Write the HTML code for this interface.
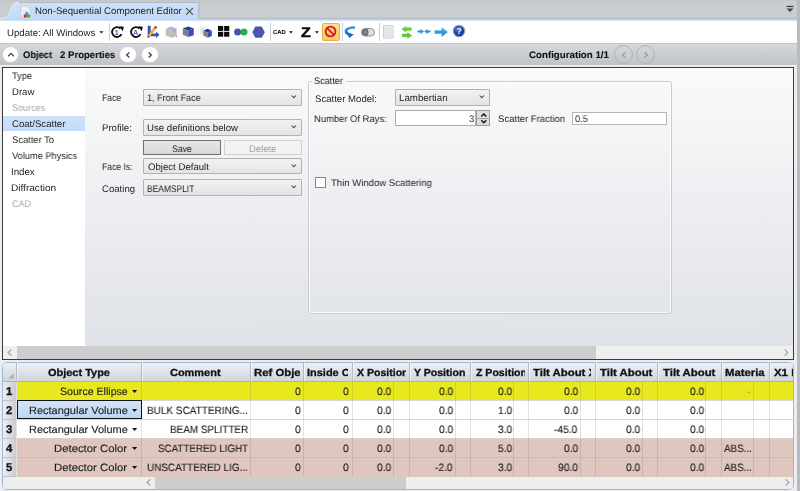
<!DOCTYPE html>
<html><head><meta charset="utf-8"><title>Non-Sequential Component Editor</title>
<style>
html,body{margin:0;padding:0;}
body{width:800px;height:491px;overflow:hidden;position:relative;background:#c9ccd1;font-family:"Liberation Sans",sans-serif;color:#1e1e1e;text-rendering:geometricPrecision;}
.t{will-change:transform;position:absolute;white-space:nowrap;line-height:1;transform-origin:0 0;}
div{box-sizing:border-box;}
svg{position:absolute;overflow:visible;will-change:transform;}
.cb{position:absolute;border:1px solid #b2b2b2;background:linear-gradient(#f2f2f2,#e4e4e4);border-radius:1px;}
.sep{position:absolute;width:1px;background:#c3d3e6;top:23px;height:18px;}
.circ{position:absolute;border-radius:50%;}
</style></head><body>
<div style="position:absolute;left:0px;top:0px;width:800px;height:1.2px;background:#c2c5ca;"></div>
<div style="position:absolute;left:797.4px;top:0px;width:2.6px;height:491px;background:#b9bbbf;"></div>
<div style="position:absolute;left:0px;top:17.6px;width:797.4px;height:1px;background:#b4b8bf;"></div>
<svg style="left:0;top:0" width="200" height="21" viewBox="0 0 200 21">
<defs><linearGradient id="tg" x1="0" y1="0" x2="0" y2="1"><stop offset="0" stop-color="#cfe1fa"/><stop offset="1" stop-color="#c1d8f8"/></linearGradient></defs>
<path d="M0 19 C6 19 8 17 10 12 C12 7 13 2.6 19 2.6 L198.6 2.6 L198.6 20.6 L0 20.6 Z" fill="url(#tg)"/><path d="M0 18.6 C6 18.6 8 16.6 10 11.6 C12 6.6 13 2.3 19 2.3" fill="none" stroke="#eef2f8" stroke-width="0.9"/><path d="M19 2.5 L198.8 2.5 L198.8 18.4" fill="none" stroke="#a9aeb6" stroke-width="0.8"/>
</svg>
<div style="position:absolute;left:0px;top:18.6px;width:797.4px;height:2px;background:linear-gradient(#b5cff3,#dbe8fb);"></div>
<svg style="left:20px;top:5px" width="12" height="14" viewBox="0 0 12 14">
<path d="M1 1 H7 L10 4 V12.5 H1 Z" fill="#f3f3f3" stroke="#c9c9c9" stroke-width="0.8"/>
<path d="M3 5h5M3 7h5M3 9h2" stroke="#d8d8d8" stroke-width="0.7"/>
<circle cx="6.8" cy="8.4" r="1.7" fill="#3a9bf0"/><circle cx="5.2" cy="11" r="1.7" fill="#e0242c"/><circle cx="8.5" cy="11" r="1.7" fill="#2fb52f"/>
</svg>
<span class="t" style="left:34.73px;top:7px;font-size:9.6px;transform:scaleX(1.0045);">Non-Sequential Component Editor</span>
<svg style="left:185px;top:7px" width="9" height="9" viewBox="0 0 9 9"><path d="M1.1 1.1 L7.9 7.6 M7.9 1.1 L1.1 7.6" stroke="#505050" stroke-width="1.25" fill="none"/></svg>
<svg style="left:786px;top:5px" width="8" height="8" viewBox="0 0 8 8"><rect x="0.5" y="0.8" width="7" height="1.3" fill="#444"/><path d="M0.5 3.4 H7.5 L4 7 Z" fill="#444"/></svg>
<div style="position:absolute;left:0px;top:20.6px;width:797.4px;height:22.6px;background:#fff;"></div>
<span class="t" style="left:7.33px;top:29px;font-size:9.6px;transform:scaleX(1.0025);">Update: All Windows</span>
<svg style="left:99px;top:31px" width="5" height="3" viewBox="0 0 5 3"><path d="M0.3 0.2 H4.5 L2.4 2.6 Z" fill="#222"/></svg>
<div class="sep" style="left:108.5px"></div>
<div class="sep" style="left:269.7px"></div>
<div class="sep" style="left:342px"></div>
<div class="sep" style="left:379.4px"></div>
<svg style="left:110.4px;top:25.1px" width="14" height="14" viewBox="-7 -7 14 14">
<path d="M4.5 2.1 A4.95 4.95 0 1 1 3.5 -3.5" fill="none" stroke="#0c0c0c" stroke-width="1.8"/>
<path d="M2.2 -5.7 L6.8 -5.3 L5.8 -0.7 Z" fill="#0c0c0c"/>
<text x="-0.3" y="2.6" font-size="7.2" font-weight="bold" text-anchor="middle" fill="#4a56b8" font-family="Liberation Sans, sans-serif">1</text></svg>
<svg style="left:128.6px;top:25.1px" width="14" height="14" viewBox="-7 -7 14 14">
<path d="M4.5 2.1 A4.95 4.95 0 1 1 3.5 -3.5" fill="none" stroke="#0c0c0c" stroke-width="1.8"/>
<path d="M2.2 -5.7 L6.8 -5.3 L5.8 -0.7 Z" fill="#0c0c0c"/>
<text x="-0.3" y="2.6" font-size="7.2" font-weight="bold" text-anchor="middle" fill="#4a56b8" font-family="Liberation Sans, sans-serif">A</text></svg>
<svg style="left:146px;top:25px" width="15" height="14" viewBox="0 0 15 14">
<path d="M1.7 0.8 H4.7 V8.5 H10.0 V6.6 L13.5 9.8 L10.0 12.9 V11.3 H1.7 Z" fill="#3953b4"/>
<path d="M2.6 11.4 L9.3 2.6" stroke="#f0a020" stroke-width="2.5"/>
<path d="M3.2 11.0 L9.6 2.7" stroke="#fbd25a" stroke-width="0.8"/>
<path d="M8.9 3.2 L10.3 1.4" stroke="#dc2430" stroke-width="2.5"/>
<path d="M1.3 12.9 L3.6 11.9 L1.9 10.6 Z" fill="#3a3a3a"/>
</svg>
<svg style="left:164.5px;top:26px" width="13" height="13" viewBox="0 0 13 13">
<path d="M5.9 0.5 L11.5 2.6 L6.6 4.7 L0.6 3.0 Z" fill="#a9b4dc"/>
<path d="M0.6 3.0 L6.6 4.7 V11.7 L0.6 9.3 Z" fill="#bdbdbd"/>
<path d="M6.6 4.7 L11.5 2.6 V9.6 L6.6 11.7 Z" fill="#a3aedb"/>
<path d="M4.6 3.6 L11.2 10.2" stroke="#f0c070" stroke-width="1.7"/>
<path d="M11.0 10.0 L12.0 11.0" stroke="#e58a8a" stroke-width="1.6"/>
</svg>
<svg style="left:182px;top:26px" width="13" height="13" viewBox="0 0 13 13">
<path d="M6.2 0.5 L11.8 2.6 L6.2 4.6 L0.8 2.4 Z" fill="#25369b"/>
<path d="M0.8 2.4 L6.2 4.6 V11 L0.8 8.7 Z" fill="#808080"/>
<path d="M6.2 4.6 L11.8 2.6 V9.2 L6.2 11 Z" fill="#3d4eb1"/>
</svg>
<svg style="left:199.5px;top:26px" width="13" height="13" viewBox="0 0 13 13">
<defs><linearGradient id="gh" x1="0" y1="0" x2="1" y2="0"><stop offset="0" stop-color="#dcdcdc"/><stop offset="1" stop-color="#f6f6f6"/></linearGradient></defs>
<rect x="0.6" y="0.5" width="5.6" height="7.7" fill="url(#gh)"/>
<path d="M7.6 2.8 L11.8 4.7 L7.6 6.5 L3.3 4.7 Z" fill="#25369b"/>
<path d="M3.3 4.7 L7.6 6.5 V11.7 L3.3 9.6 Z" fill="#808080"/>
<path d="M7.6 6.5 L11.8 4.7 V10 L7.6 11.7 Z" fill="#3d4eb1"/>
</svg>
<svg style="left:217.8px;top:26.2px" width="12" height="11" viewBox="0 0 12 11">
<rect x="0" y="0" width="5.2" height="4.9" fill="#0a0a0a"/><rect x="6.1" y="0" width="5.2" height="4.9" fill="#0a0a0a"/>
<rect x="0" y="5.8" width="5.2" height="4.9" fill="#0a0a0a"/><rect x="6.1" y="5.8" width="5.2" height="4.9" fill="#0a0a0a"/></svg>
<svg style="left:233px;top:27px" width="16" height="10" viewBox="0 0 16 10">
<circle cx="4.6" cy="5" r="3.5" fill="#4652b4"/><circle cx="11" cy="5" r="3.5" fill="#22b14c"/></svg>
<svg style="left:252px;top:25.6px" width="13" height="13" viewBox="0 0 13 13">
<path d="M0.3 6.2 L3.4 0.6 H9.7 L12.8 6.2 L9.7 11.8 H3.4 Z" fill="#4a55b2"/></svg>
<span class="t" style="left:273.27px;top:31px;font-size:5.8px;transform:scaleX(1.0113);font-weight:bold;-webkit-text-stroke:0.1px;color:#111;">CAD</span>
<svg style="left:288.6px;top:30.8px" width="4" height="3" viewBox="0 0 4 3"><path d="M0 0.2 H3.8 L1.9 2.4 Z" fill="#111"/></svg>
<span class="t" style="left:301.42px;top:25px;font-size:14px;transform:scaleX(1.1429);font-weight:bold;-webkit-text-stroke:0.5px;color:#0a0a0a;">Z</span>
<svg style="left:314.8px;top:30.8px" width="4" height="3" viewBox="0 0 4 3"><path d="M0 0.2 H3.8 L1.9 2.4 Z" fill="#111"/></svg>
<div style="position:absolute;left:322px;top:23px;width:18px;height:17.8px;background:linear-gradient(#fde08e,#fbc860);border:1px solid #e6b04a;border-radius:2px;"></div>
<svg style="left:324.3px;top:25.3px" width="13" height="13" viewBox="-6.5 -6.5 13 13">
<circle r="4.9" fill="none" stroke="#d3202a" stroke-width="1.9"/><path d="M-3.4 -3.4 L3.4 3.4" stroke="#d3202a" stroke-width="1.9"/></svg>
<svg style="left:344px;top:26px" width="12" height="13" viewBox="0 0 12 13">
<defs><linearGradient id="ba" x1="0" y1="0" x2="0" y2="1"><stop offset="0" stop-color="#2fa0ec"/><stop offset="1" stop-color="#1662b4"/></linearGradient></defs>
<path d="M11 0.2 C5.5 0.2 0.6 1.6 0.6 5.2 C0.6 6.9 1.7 8.0 3.2 8.7 L5.4 11.8 L9.5 8.5 L6.2 7.3 C4.6 6.6 3.6 6.0 3.6 4.9 C3.6 3.2 7 2.7 11 2.7 Z" fill="url(#ba)"/>
<path d="M2.8 6.3 L9.5 8.5 L5.4 11.8 Z" fill="#1b6cbc"/></svg>
<svg style="left:361.4px;top:27.6px" width="14" height="9" viewBox="0 0 14 9">
<rect x="0.5" y="0.5" width="13" height="7.6" rx="3.8" fill="#dedede" stroke="#7c7c7c" stroke-width="0.8"/>
<path d="M4.3 0.5 H7.2 V8.1 H4.3 A3.8 3.8 0 0 1 4.3 0.5 Z" fill="#7e7e7e"/>
<circle cx="4.8" cy="4.3" r="2.5" fill="#6a6a6a"/><circle cx="4.8" cy="4.3" r="1.5" fill="#8e8e8e"/></svg>
<svg style="left:382.6px;top:25.2px" width="11" height="14" viewBox="0 0 11 14">
<rect x="0.6" y="0.6" width="9.4" height="12.4" fill="#f4f5f7" stroke="#c6c6c6" stroke-width="0.9"/>
<rect x="2.6" y="1.4" width="6.8" height="10.8" fill="#e3ecf8"/>
<path d="M1.2 3.2H9.4M1.2 5.2H9.4M1.2 7.2H9.4M1.2 9.2H9.4M1.2 11.0H9.4" stroke="#dcdcdc" stroke-width="0.6"/>
<path d="M2.4 1.2V12.4" stroke="#e6cfcf" stroke-width="0.6"/></svg>
<svg style="left:400.6px;top:25.6px" width="12" height="13" viewBox="0 0 12 13">
<path d="M0.8 3.15 L4.85 0.4 V1.8 H10.25 V4.5 H4.85 V5.9 Z" fill="#62d63e" stroke="#48b82c" stroke-width="0.4"/>
<path d="M10.8 9.5 L6.65 6.7 V8.1 H1.25 V10.8 H6.65 V12.3 Z" fill="#55cc32" stroke="#3fae26" stroke-width="0.4"/></svg>
<svg style="left:416.6px;top:29.4px" width="14" height="6" viewBox="0 0 14 6">
<path d="M0.5 1.5 H3.5 V0 L7.1 2.5 L3.5 5 V3.5 H0.5 Z" fill="#2598e4"/>
<path d="M13.7 1.5 H10.7 V0 L7.1 2.5 L10.7 5 V3.5 H13.7 Z" fill="#2598e4"/></svg>
<svg style="left:434px;top:27px" width="14" height="11" viewBox="0 0 14 11">
<defs><linearGradient id="ra" x1="0" y1="0" x2="0" y2="1"><stop offset="0" stop-color="#52b8f2"/><stop offset="1" stop-color="#1a78c8"/></linearGradient></defs>
<path d="M0.7 3.6 H7.8 V0.8 L13.7 5.1 L7.8 9.5 V6.6 H0.7 Z" fill="url(#ra)" stroke="#2a84cc" stroke-width="0.3"/></svg>
<svg style="left:451.55px;top:24.45px" width="14" height="14" viewBox="-7 -7 14 14">
<circle r="6.3" fill="#a4a8af"/><circle r="5.2" fill="#1f3fa4"/><circle cx="-0.8" cy="-1.8" r="3.6" fill="#4a74d4" opacity="0.6"/>
<text x="0.1" y="3.0" font-size="8.6" font-weight="bold" text-anchor="middle" fill="#fff" font-family="Liberation Sans, sans-serif">?</text></svg>
<div style="position:absolute;left:0px;top:43.2px;width:797.4px;height:21.6px;background:linear-gradient(#d6d8dc,#bfc2c6);border-top:1px solid #c3c5c9;"></div>
<div style="position:absolute;left:0px;top:64.8px;width:797.4px;height:426.2px;background:#ecedf0;"></div>
<div style="position:absolute;left:2px;top:46px;width:17.2px;height:17.2px;background:#fff;border:1px solid #cfcfcf;border-radius:50%;"></div><svg style="left:5.6px;top:49.6px" width="10" height="10" viewBox="-5 -5 10 10"><path d="M-2.8 1.2 L0 -1.6 L2.8 1.2" fill="none" stroke="#444" stroke-width="1.3"/></svg>
<div style="position:absolute;left:119.4px;top:45.8px;width:17.6px;height:17.6px;background:#fff;border:1px solid #cfcfcf;border-radius:50%;"></div><svg style="left:123.19999999999999px;top:49.6px" width="10" height="10" viewBox="-5 -5 10 10"><path d="M1.4 -2.6 L-1.4 0 L1.4 2.6" fill="none" stroke="#444" stroke-width="1.3"/></svg>
<div style="position:absolute;left:141px;top:45.8px;width:17.6px;height:17.6px;background:#fff;border:1px solid #cfcfcf;border-radius:50%;"></div><svg style="left:144.8px;top:49.6px" width="10" height="10" viewBox="-5 -5 10 10"><path d="M-1.4 -2.6 L1.4 0 L-1.4 2.6" fill="none" stroke="#444" stroke-width="1.3"/></svg>
<div style="position:absolute;left:614.1px;top:45.2px;width:18.8px;height:18.8px;background:transparent;border:1px solid #b2b2b2;border-radius:50%;"></div><svg style="left:618.5px;top:49.6px" width="10" height="10" viewBox="-5 -5 10 10"><path d="M1.4 -2.6 L-1.4 0 L1.4 2.6" fill="none" stroke="#9a9a9a" stroke-width="1.3"/></svg>
<div style="position:absolute;left:636.2px;top:45.2px;width:18.8px;height:18.8px;background:transparent;border:1px solid #b2b2b2;border-radius:50%;"></div><svg style="left:640.6px;top:49.6px" width="10" height="10" viewBox="-5 -5 10 10"><path d="M-1.4 -2.6 L1.4 0 L-1.4 2.6" fill="none" stroke="#9a9a9a" stroke-width="1.3"/></svg>
<span class="t" style="left:23.03px;top:51px;font-size:9.6px;transform:scaleX(0.9736);font-weight:bold;-webkit-text-stroke:0.1px;color:#111;">Object</span>
<span class="t" style="left:60.11px;top:51px;font-size:9.6px;transform:scaleX(0.9961);font-weight:bold;-webkit-text-stroke:0.1px;color:#111;">2 Properties</span>
<span class="t" style="left:529.21px;top:51px;font-size:9.6px;transform:scaleX(1.0136);font-weight:bold;-webkit-text-stroke:0.1px;color:#111;">Configuration 1/1</span>
<div style="position:absolute;left:2.2px;top:67px;width:791.6px;height:292.6px;background:#fff;border:1px solid #3a3a3a;"></div>
<div style="position:absolute;left:85px;top:68px;width:707.8px;height:278px;background:linear-gradient(#fafafa,#dfe2e8);"></div>
<div style="position:absolute;left:3.2px;top:116px;width:81.8px;height:14.6px;background:linear-gradient(#cfe2fb,#c2dafa);"></div>
<span class="t" style="left:12.12px;top:72px;font-size:9.6px;transform:scaleX(0.9573);">Type</span>
<span class="t" style="left:11.54px;top:88px;font-size:9.6px;transform:scaleX(0.9954);">Draw</span>
<span class="t" style="left:11.85px;top:104px;font-size:9.6px;transform:scaleX(0.9427);color:#a9a9a9;">Sources</span>
<span class="t" style="left:11.82px;top:120px;font-size:9.6px;transform:scaleX(0.9961);">Coat/Scatter</span>
<span class="t" style="left:11.83px;top:136px;font-size:9.6px;transform:scaleX(0.9754);">Scatter To</span>
<span class="t" style="left:12.21px;top:152px;font-size:9.6px;transform:scaleX(0.9614);">Volume Physics</span>
<span class="t" style="left:11.43px;top:168px;font-size:9.6px;transform:scaleX(1.0106);">Index</span>
<span class="t" style="left:11.49px;top:184px;font-size:9.6px;transform:scaleX(1.0489);">Diffraction</span>
<span class="t" style="left:11.85px;top:200px;font-size:9.6px;transform:scaleX(0.9437);color:#a9a9a9;">CAD</span>
<div style="position:absolute;left:3.2px;top:346px;width:789.6px;height:12.6px;background:#efefef;"></div>
<div style="position:absolute;left:17px;top:346px;width:579px;height:12.6px;background:#cdcdcd;"></div>
<svg style="left:7.4px;top:349.2px" width="6" height="7" viewBox="0 0 6 7"><path d="M4.4 0.4 L1.2 3.5 L4.4 6.6" fill="none" stroke="#a3a3a3" stroke-width="1.25"/></svg>
<svg style="left:783.2px;top:349.2px" width="6" height="7" viewBox="0 0 6 7"><path d="M1.6 0.4 L4.8 3.5 L1.6 6.6" fill="none" stroke="#a3a3a3" stroke-width="1.25"/></svg>
<span class="t" style="left:102.11px;top:94px;font-size:9.6px;transform:scaleX(0.8929);">Face</span>
<div class="cb" style="position:absolute;left:143px;top:89px;width:159.4px;height:16.8px;"></div><span class="t" style="left:147.28px;top:94px;font-size:9.6px;transform:scaleX(0.9396);">1, Front Face</span><svg style="left:291.2px;top:95.0px" width="6" height="4" viewBox="0 0 6 4"><path d="M0.6 0.5 L2.8 2.7 L5.0 0.5" fill="none" stroke="#484848" stroke-width="1.05"/></svg>
<span class="t" style="left:102.03px;top:124px;font-size:9.6px;transform:scaleX(0.9991);">Profile:</span>
<div class="cb" style="position:absolute;left:143px;top:119px;width:159.4px;height:16.8px;"></div><span class="t" style="left:147.23px;top:124px;font-size:9.6px;transform:scaleX(1.0039);">Use definitions below</span><svg style="left:291.2px;top:125.0px" width="6" height="4" viewBox="0 0 6 4"><path d="M0.6 0.5 L2.8 2.7 L5.0 0.5" fill="none" stroke="#484848" stroke-width="1.05"/></svg>
<div style="position:absolute;left:143px;top:140px;width:78.4px;height:15.4px;background:linear-gradient(#e6e6e6,#d9d9d9);border:1px solid #707070;"></div>
<span class="t" style="left:171.57px;top:145px;font-size:9.6px;transform:scaleX(0.8983);">Save</span>
<div style="position:absolute;left:223.8px;top:140px;width:78.6px;height:15.4px;background:#f3f3f3;border:1px solid #d2d2d2;"></div>
<span class="t" style="left:249.25px;top:145px;font-size:9.6px;transform:scaleX(0.9813);color:#9b9b9b;">Delete</span>
<span class="t" style="left:102.12px;top:163px;font-size:9.6px;transform:scaleX(0.8911);">Face Is:</span>
<div class="cb" style="position:absolute;left:143px;top:157.6px;width:159.4px;height:16.8px;"></div><span class="t" style="left:147.52px;top:163px;font-size:9.6px;transform:scaleX(1.0019);">Object Default</span><svg style="left:291.2px;top:163.6px" width="6" height="4" viewBox="0 0 6 4"><path d="M0.6 0.5 L2.8 2.7 L5.0 0.5" fill="none" stroke="#484848" stroke-width="1.05"/></svg>
<span class="t" style="left:102.32px;top:185px;font-size:9.6px;transform:scaleX(1.0010);">Coating</span>
<div class="cb" style="position:absolute;left:143px;top:179.4px;width:159.4px;height:16.8px;"></div><span class="t" style="left:147.32px;top:185px;font-size:9.6px;transform:scaleX(0.8791);">BEAMSPLIT</span><svg style="left:291.2px;top:185.4px" width="6" height="4" viewBox="0 0 6 4"><path d="M0.6 0.5 L2.8 2.7 L5.0 0.5" fill="none" stroke="#484848" stroke-width="1.05"/></svg>
<div style="position:absolute;left:307.6px;top:81px;width:364px;height:232.8px;border:1px solid #c9cdd3;border-radius:3px;box-shadow:inset 0 0 0 1px rgba(255,255,255,0.75);"></div>
<div style="position:absolute;left:311.5px;top:78px;width:34px;height:8px;background:#f5f5f5;"></div>
<span class="t" style="left:313.55px;top:77px;font-size:9.6px;transform:scaleX(0.9476);">Scatter</span>
<span class="t" style="left:314.72px;top:95px;font-size:9.6px;transform:scaleX(0.9954);">Scatter Model:</span>
<div class="cb" style="position:absolute;left:395px;top:89px;width:95.4px;height:16.6px;"></div><span class="t" style="left:399.02px;top:94px;font-size:9.6px;transform:scaleX(1.0117);">Lambertian</span><svg style="left:479.2px;top:95.0px" width="6" height="4" viewBox="0 0 6 4"><path d="M0.6 0.5 L2.8 2.7 L5.0 0.5" fill="none" stroke="#484848" stroke-width="1.05"/></svg>
<span class="t" style="left:314.45px;top:115px;font-size:9.6px;transform:scaleX(0.9810);">Number Of Rays:</span>
<div style="position:absolute;left:395px;top:110.2px;width:81.4px;height:15.4px;background:#fff;border:1px solid #abadb3;"></div>
<span class="t" style="left:468.62px;top:115px;font-size:9.6px;transform:scaleX(0.9550);">3</span>
<div style="position:absolute;left:476.4px;top:110.2px;width:13.8px;height:15.4px;background:#dddddd;border:1px solid #9c9c9c;"></div>
<div style="position:absolute;left:476.4px;top:117.5px;width:13.8px;height:1px;background:#a4a4a4;"></div>
<svg style="left:479.6px;top:111.6px" width="8" height="13" viewBox="0 0 8 13"><path d="M1.3 4.5 L3.8 2.0 L6.3 4.5" fill="none" stroke="#111" stroke-width="1.4"/><path d="M1.3 8.3 L3.8 10.8 L6.3 8.3" fill="none" stroke="#111" stroke-width="1.4"/></svg>
<span class="t" style="left:497.52px;top:115px;font-size:9.6px;transform:scaleX(0.9906);">Scatter Fraction</span>
<div style="position:absolute;left:572px;top:111.8px;width:95.4px;height:13.6px;background:#fff;border:1px solid #b3b6bc;"></div>
<span class="t" style="left:574.63px;top:115px;font-size:9.6px;transform:scaleX(0.9550);">0.5</span>
<div style="position:absolute;left:315px;top:177.3px;width:11.3px;height:10.5px;background:#fff;border:1px solid #858585;"></div>
<span class="t" style="left:330.51px;top:179px;font-size:9.6px;transform:scaleX(0.9949);">Thin Window Scattering</span>
<div style="position:absolute;left:2.3px;top:361.6px;width:791.6px;height:128.6px;background:#fff;border:1.2px solid #9fb7d6;border-radius:5px;overflow:hidden;"></div>
<div style="position:absolute;left:3.4px;top:362.8px;width:789.6px;height:18.7px;background:linear-gradient(#eceff4,#d0d5de);border-radius:4px 4px 0 0;"></div>
<div style="position:absolute;left:3.4px;top:381.5px;width:13.1px;height:95.2px;background:linear-gradient(to right,#eef0f3,#c8cbd2);"></div>
<div style="position:absolute;left:16.5px;top:381.5px;width:776.6px;height:19px;background:#e8e81f;"></div>
<div style="position:absolute;left:16.5px;top:400.5px;width:776.6px;height:19px;background:#ffffff;"></div>
<div style="position:absolute;left:16.5px;top:419.5px;width:776.6px;height:19px;background:#ffffff;"></div>
<div style="position:absolute;left:16.5px;top:438.5px;width:776.6px;height:19px;background:#dfc6be;"></div>
<div style="position:absolute;left:16.5px;top:457.5px;width:776.6px;height:19px;background:#dfc6be;"></div>
<div style="position:absolute;left:3.4px;top:381px;width:13.1px;height:1px;background:#bfc4cc;"></div>
<div style="position:absolute;left:3.4px;top:400px;width:13.1px;height:1px;background:#bfc4cc;"></div>
<div style="position:absolute;left:3.4px;top:419px;width:13.1px;height:1px;background:#bfc4cc;"></div>
<div style="position:absolute;left:3.4px;top:438px;width:13.1px;height:1px;background:#bfc4cc;"></div>
<div style="position:absolute;left:3.4px;top:457px;width:13.1px;height:1px;background:#bfc4cc;"></div>
<div style="position:absolute;left:3.4px;top:476px;width:13.1px;height:1px;background:#bfc4cc;"></div>
<div style="position:absolute;left:16.5px;top:399.9px;width:776.6px;height:1px;background:#d6d6d6;"></div>
<div style="position:absolute;left:16.5px;top:418.9px;width:776.6px;height:1px;background:#d6d6d6;"></div>
<div style="position:absolute;left:17px;top:437.6px;width:776.4px;height:1px;background:#d9d2cf;"></div>
<div style="position:absolute;left:17px;top:456.6px;width:776.4px;height:1px;background:#d2bab3;"></div>
<div style="position:absolute;left:16px;top:362.4px;width:1px;height:19.1px;background:#b1bac8;"></div>
<div style="position:absolute;left:17px;top:362.4px;width:1px;height:19.1px;background:rgba(255,255,255,0.55);"></div>
<div style="position:absolute;left:141px;top:362.4px;width:1px;height:19.1px;background:#b1bac8;"></div>
<div style="position:absolute;left:142px;top:362.4px;width:1px;height:19.1px;background:rgba(255,255,255,0.55);"></div>
<div style="position:absolute;left:249.5px;top:362.4px;width:1px;height:19.1px;background:#b1bac8;"></div>
<div style="position:absolute;left:250.5px;top:362.4px;width:1px;height:19.1px;background:rgba(255,255,255,0.55);"></div>
<div style="position:absolute;left:303px;top:362.4px;width:1px;height:19.1px;background:#b1bac8;"></div>
<div style="position:absolute;left:304px;top:362.4px;width:1px;height:19.1px;background:rgba(255,255,255,0.55);"></div>
<div style="position:absolute;left:351.5px;top:362.4px;width:1px;height:19.1px;background:#b1bac8;"></div>
<div style="position:absolute;left:352.5px;top:362.4px;width:1px;height:19.1px;background:rgba(255,255,255,0.55);"></div>
<div style="position:absolute;left:409px;top:362.4px;width:1px;height:19.1px;background:#b1bac8;"></div>
<div style="position:absolute;left:410px;top:362.4px;width:1px;height:19.1px;background:rgba(255,255,255,0.55);"></div>
<div style="position:absolute;left:469.5px;top:362.4px;width:1px;height:19.1px;background:#b1bac8;"></div>
<div style="position:absolute;left:470.5px;top:362.4px;width:1px;height:19.1px;background:rgba(255,255,255,0.55);"></div>
<div style="position:absolute;left:528px;top:362.4px;width:1px;height:19.1px;background:#b1bac8;"></div>
<div style="position:absolute;left:529px;top:362.4px;width:1px;height:19.1px;background:rgba(255,255,255,0.55);"></div>
<div style="position:absolute;left:594.5px;top:362.4px;width:1px;height:19.1px;background:#b1bac8;"></div>
<div style="position:absolute;left:595.5px;top:362.4px;width:1px;height:19.1px;background:rgba(255,255,255,0.55);"></div>
<div style="position:absolute;left:657px;top:362.4px;width:1px;height:19.1px;background:#b1bac8;"></div>
<div style="position:absolute;left:658px;top:362.4px;width:1px;height:19.1px;background:rgba(255,255,255,0.55);"></div>
<div style="position:absolute;left:721px;top:362.4px;width:1px;height:19.1px;background:#b1bac8;"></div>
<div style="position:absolute;left:722px;top:362.4px;width:1px;height:19.1px;background:rgba(255,255,255,0.55);"></div>
<div style="position:absolute;left:768.5px;top:362.4px;width:1px;height:19.1px;background:#b1bac8;"></div>
<div style="position:absolute;left:769.5px;top:362.4px;width:1px;height:19.1px;background:rgba(255,255,255,0.55);"></div>
<div style="position:absolute;left:16px;top:381.5px;width:1px;height:95px;background:rgba(110,110,110,0.2);"></div>
<div style="position:absolute;left:141px;top:381.5px;width:1px;height:95px;background:rgba(110,110,110,0.2);"></div>
<div style="position:absolute;left:249.5px;top:381.5px;width:1px;height:95px;background:rgba(110,110,110,0.2);"></div>
<div style="position:absolute;left:303px;top:381.5px;width:1px;height:95px;background:rgba(110,110,110,0.2);"></div>
<div style="position:absolute;left:351.5px;top:381.5px;width:1px;height:95px;background:rgba(110,110,110,0.2);"></div>
<div style="position:absolute;left:409px;top:381.5px;width:1px;height:95px;background:rgba(110,110,110,0.2);"></div>
<div style="position:absolute;left:469.5px;top:381.5px;width:1px;height:95px;background:rgba(110,110,110,0.2);"></div>
<div style="position:absolute;left:528px;top:381.5px;width:1px;height:95px;background:rgba(110,110,110,0.2);"></div>
<div style="position:absolute;left:594.5px;top:381.5px;width:1px;height:95px;background:rgba(110,110,110,0.2);"></div>
<div style="position:absolute;left:657px;top:381.5px;width:1px;height:95px;background:rgba(110,110,110,0.2);"></div>
<div style="position:absolute;left:721px;top:381.5px;width:1px;height:95px;background:rgba(110,110,110,0.2);"></div>
<div style="position:absolute;left:768.5px;top:381.5px;width:1px;height:95px;background:rgba(110,110,110,0.2);"></div>
<div style="position:absolute;left:393px;top:381.5px;width:1px;height:95px;background:rgba(110,110,110,0.2);"></div>
<div style="position:absolute;left:454.5px;top:381.5px;width:1px;height:95px;background:rgba(110,110,110,0.2);"></div>
<div style="position:absolute;left:513px;top:381.5px;width:1px;height:95px;background:rgba(110,110,110,0.2);"></div>
<div style="position:absolute;left:579.5px;top:381.5px;width:1px;height:95px;background:rgba(110,110,110,0.2);"></div>
<div style="position:absolute;left:642px;top:381.5px;width:1px;height:95px;background:rgba(110,110,110,0.2);"></div>
<div style="position:absolute;left:705px;top:381.5px;width:1px;height:95px;background:rgba(110,110,110,0.2);"></div>
<div style="position:absolute;left:753.3px;top:381.5px;width:1px;height:95px;background:rgba(110,110,110,0.2);"></div>
<div style="position:absolute;left:3.8px;top:380.9px;width:789.6px;height:1px;background:#aab3c2;"></div>
<svg style="left:8px;top:373.4px" width="6" height="6" viewBox="0 0 6 6"><path d="M5.6 0.4 V5.6 H0.4 Z" fill="#a9adb5"/></svg>
<div style="position:absolute;left:17px;top:362.4px;width:123px;height:19.1px;overflow:hidden;"><span class="t" style="left:31.01px;top:6.60px;font-size:10.3px;transform:scaleX(1.065);font-weight:bold;-webkit-text-stroke:0.3px;color:#111;">Object Type</span></div>
<div style="position:absolute;left:142px;top:362.4px;width:106.5px;height:19.1px;overflow:hidden;"><span class="t" style="left:28.30px;top:6.60px;font-size:10.3px;transform:scaleX(1.065);font-weight:bold;-webkit-text-stroke:0.3px;color:#111;">Comment</span></div>
<div style="position:absolute;left:250.5px;top:362.4px;width:49.1px;height:19.1px;overflow:hidden;"><span class="t" style="left:3.61px;top:6.60px;font-size:10.3px;transform:scaleX(1.1);font-weight:bold;-webkit-text-stroke:0.3px;color:#111;">Ref Object</span></div>
<div style="position:absolute;left:304px;top:362.4px;width:44.1px;height:19.1px;overflow:hidden;"><span class="t" style="left:3.33px;top:6.60px;font-size:10.3px;transform:scaleX(1.065);font-weight:bold;-webkit-text-stroke:0.3px;color:#111;">Inside Of</span></div>
<div style="position:absolute;left:352.5px;top:362.4px;width:53.1px;height:19.1px;overflow:hidden;"><span class="t" style="left:4.99px;top:6.60px;font-size:10.3px;transform:scaleX(1.024);font-weight:bold;-webkit-text-stroke:0.3px;color:#111;">X Position</span></div>
<div style="position:absolute;left:410px;top:362.4px;width:56.1px;height:19.1px;overflow:hidden;"><span class="t" style="left:3.99px;top:6.60px;font-size:10.3px;transform:scaleX(1.024);font-weight:bold;-webkit-text-stroke:0.3px;color:#111;">Y Position</span></div>
<div style="position:absolute;left:470.5px;top:362.4px;width:54.1px;height:19.1px;overflow:hidden;"><span class="t" style="left:5.28px;top:6.60px;font-size:10.3px;transform:scaleX(1.024);font-weight:bold;-webkit-text-stroke:0.3px;color:#111;">Z Position</span></div>
<div style="position:absolute;left:529px;top:362.4px;width:62.1px;height:19.1px;overflow:hidden;"><span class="t" style="left:3.99px;top:6.60px;font-size:10.3px;transform:scaleX(1.104);font-weight:bold;-webkit-text-stroke:0.3px;color:#111;">Tilt About X</span></div>
<div style="position:absolute;left:595.5px;top:362.4px;width:58.1px;height:19.1px;overflow:hidden;"><span class="t" style="left:4.29px;top:6.60px;font-size:10.3px;transform:scaleX(1.104);font-weight:bold;-webkit-text-stroke:0.3px;color:#111;">Tilt About Y</span></div>
<div style="position:absolute;left:658px;top:362.4px;width:59.6px;height:19.1px;overflow:hidden;"><span class="t" style="left:4.89px;top:6.60px;font-size:10.3px;transform:scaleX(1.104);font-weight:bold;-webkit-text-stroke:0.3px;color:#111;">Tilt About Z</span></div>
<div style="position:absolute;left:722px;top:362.4px;width:43.1px;height:19.1px;overflow:hidden;"><span class="t" style="left:3.41px;top:6.60px;font-size:10.3px;transform:scaleX(1.1);font-weight:bold;-webkit-text-stroke:0.3px;color:#111;">Material</span></div>
<div style="position:absolute;left:769.5px;top:362.4px;width:23.7px;height:19.1px;overflow:hidden;"><span class="t" style="left:4.09px;top:6.60px;font-size:10.3px;transform:scaleX(1.11);font-weight:bold;-webkit-text-stroke:0.3px;color:#111;">X1 Half Width</span></div>
<div style="position:absolute;left:16.5px;top:400px;width:125.1px;height:19.2px;background:linear-gradient(#d3e3f8,#bfd6f4);border:1.4px solid #111;"></div>
<span class="t" style="left:6.10px;top:387px;font-size:11.4px;transform:scaleX(0.9800);font-weight:bold;-webkit-text-stroke:0.3px;color:#111;">1</span>
<span class="t" style="left:59.87px;top:387px;font-size:10.6px;transform:scaleX(0.9988);-webkit-text-stroke:0.12px;">Source Ellipse</span>
<svg style="left:131.9px;top:389.8px" width="6" height="4" viewBox="0 0 6 4"><path d="M0 0 H5.2 L2.6 3.1 Z" fill="#111"/></svg>
<span class="t" style="left:295.25px;top:387px;font-size:10.6px;transform:scaleX(0.9700);-webkit-text-stroke:0.12px;">0</span>
<span class="t" style="left:343.25px;top:387px;font-size:10.6px;transform:scaleX(0.9700);-webkit-text-stroke:0.12px;">0</span>
<span class="t" style="left:377.49px;top:387px;font-size:10.6px;transform:scaleX(0.9650);-webkit-text-stroke:0.12px;">0.0</span>
<span class="t" style="left:438.69px;top:387px;font-size:10.6px;transform:scaleX(0.9650);-webkit-text-stroke:0.12px;">0.0</span>
<span class="t" style="left:497.59px;top:387px;font-size:10.6px;transform:scaleX(0.9650);-webkit-text-stroke:0.12px;">0.0</span>
<span class="t" style="left:563.59px;top:387px;font-size:10.6px;transform:scaleX(0.9650);-webkit-text-stroke:0.12px;">0.0</span>
<span class="t" style="left:626.19px;top:387px;font-size:10.6px;transform:scaleX(0.9650);-webkit-text-stroke:0.12px;">0.0</span>
<span class="t" style="left:689.89px;top:387px;font-size:10.6px;transform:scaleX(0.9650);-webkit-text-stroke:0.12px;">0.0</span>
<span class="t" style="left:747.33px;top:387px;font-size:10.6px;transform:scaleX(1.0000);-webkit-text-stroke:0.12px;color:#b89a1a;">-</span>
<span class="t" style="left:6.33px;top:406px;font-size:11.4px;transform:scaleX(0.9800);font-weight:bold;-webkit-text-stroke:0.3px;color:#111;">2</span>
<span class="t" style="left:28.72px;top:406px;font-size:10.6px;transform:scaleX(1.0358);-webkit-text-stroke:0.12px;">Rectangular Volume</span>
<svg style="left:131.9px;top:408.8px" width="6" height="4" viewBox="0 0 6 4"><path d="M0 0 H5.2 L2.6 3.1 Z" fill="#111"/></svg>
<span class="t" style="left:147.20px;top:406px;font-size:10.6px;transform:scaleX(0.9443);-webkit-text-stroke:0.12px;">BULK SCATTERING...</span>
<span class="t" style="left:295.25px;top:406px;font-size:10.6px;transform:scaleX(0.9700);-webkit-text-stroke:0.12px;">0</span>
<span class="t" style="left:343.25px;top:406px;font-size:10.6px;transform:scaleX(0.9700);-webkit-text-stroke:0.12px;">0</span>
<span class="t" style="left:377.49px;top:406px;font-size:10.6px;transform:scaleX(0.9650);-webkit-text-stroke:0.12px;">0.0</span>
<span class="t" style="left:438.69px;top:406px;font-size:10.6px;transform:scaleX(0.9650);-webkit-text-stroke:0.12px;">0.0</span>
<span class="t" style="left:497.59px;top:406px;font-size:10.6px;transform:scaleX(0.9650);-webkit-text-stroke:0.12px;">1.0</span>
<span class="t" style="left:563.59px;top:406px;font-size:10.6px;transform:scaleX(0.9650);-webkit-text-stroke:0.12px;">0.0</span>
<span class="t" style="left:626.19px;top:406px;font-size:10.6px;transform:scaleX(0.9650);-webkit-text-stroke:0.12px;">0.0</span>
<span class="t" style="left:689.89px;top:406px;font-size:10.6px;transform:scaleX(0.9650);-webkit-text-stroke:0.12px;">0.0</span>
<span class="t" style="left:6.38px;top:425px;font-size:11.4px;transform:scaleX(0.9800);font-weight:bold;-webkit-text-stroke:0.3px;color:#111;">3</span>
<span class="t" style="left:28.72px;top:425px;font-size:10.6px;transform:scaleX(1.0358);-webkit-text-stroke:0.12px;">Rectangular Volume</span>
<svg style="left:131.9px;top:427.8px" width="6" height="4" viewBox="0 0 6 4"><path d="M0 0 H5.2 L2.6 3.1 Z" fill="#111"/></svg>
<span class="t" style="left:169.71px;top:425px;font-size:10.6px;transform:scaleX(0.9349);-webkit-text-stroke:0.12px;">BEAM SPLITTER</span>
<span class="t" style="left:295.25px;top:425px;font-size:10.6px;transform:scaleX(0.9700);-webkit-text-stroke:0.12px;">0</span>
<span class="t" style="left:343.25px;top:425px;font-size:10.6px;transform:scaleX(0.9700);-webkit-text-stroke:0.12px;">0</span>
<span class="t" style="left:377.49px;top:425px;font-size:10.6px;transform:scaleX(0.9650);-webkit-text-stroke:0.12px;">0.0</span>
<span class="t" style="left:438.69px;top:425px;font-size:10.6px;transform:scaleX(0.9650);-webkit-text-stroke:0.12px;">0.0</span>
<span class="t" style="left:497.59px;top:425px;font-size:10.6px;transform:scaleX(0.9650);-webkit-text-stroke:0.12px;">3.0</span>
<span class="t" style="left:554.49px;top:425px;font-size:10.6px;transform:scaleX(0.9650);-webkit-text-stroke:0.12px;">-45.0</span>
<span class="t" style="left:626.19px;top:425px;font-size:10.6px;transform:scaleX(0.9650);-webkit-text-stroke:0.12px;">0.0</span>
<span class="t" style="left:689.89px;top:425px;font-size:10.6px;transform:scaleX(0.9650);-webkit-text-stroke:0.12px;">0.0</span>
<span class="t" style="left:6.27px;top:444px;font-size:11.4px;transform:scaleX(0.9800);font-weight:bold;-webkit-text-stroke:0.3px;color:#111;">4</span>
<span class="t" style="left:54.19px;top:444px;font-size:10.6px;transform:scaleX(1.0697);-webkit-text-stroke:0.12px;">Detector Color</span>
<svg style="left:131.9px;top:446.8px" width="6" height="4" viewBox="0 0 6 4"><path d="M0 0 H5.2 L2.6 3.1 Z" fill="#111"/></svg>
<span class="t" style="left:157.51px;top:444px;font-size:10.6px;transform:scaleX(0.9238);-webkit-text-stroke:0.12px;">SCATTERED LIGHT</span>
<span class="t" style="left:295.25px;top:444px;font-size:10.6px;transform:scaleX(0.9700);-webkit-text-stroke:0.12px;">0</span>
<span class="t" style="left:343.25px;top:444px;font-size:10.6px;transform:scaleX(0.9700);-webkit-text-stroke:0.12px;">0</span>
<span class="t" style="left:377.49px;top:444px;font-size:10.6px;transform:scaleX(0.9650);-webkit-text-stroke:0.12px;">0.0</span>
<span class="t" style="left:438.69px;top:444px;font-size:10.6px;transform:scaleX(0.9650);-webkit-text-stroke:0.12px;">0.0</span>
<span class="t" style="left:497.59px;top:444px;font-size:10.6px;transform:scaleX(0.9650);-webkit-text-stroke:0.12px;">5.0</span>
<span class="t" style="left:563.59px;top:444px;font-size:10.6px;transform:scaleX(0.9650);-webkit-text-stroke:0.12px;">0.0</span>
<span class="t" style="left:626.19px;top:444px;font-size:10.6px;transform:scaleX(0.9650);-webkit-text-stroke:0.12px;">0.0</span>
<span class="t" style="left:689.89px;top:444px;font-size:10.6px;transform:scaleX(0.9650);-webkit-text-stroke:0.12px;">0.0</span>
<span class="t" style="left:723.70px;top:444px;font-size:10.6px;transform:scaleX(0.9262);-webkit-text-stroke:0.12px;">ABS...</span>
<span class="t" style="left:6.27px;top:463px;font-size:11.4px;transform:scaleX(0.9800);font-weight:bold;-webkit-text-stroke:0.3px;color:#111;">5</span>
<span class="t" style="left:54.19px;top:463px;font-size:10.6px;transform:scaleX(1.0697);-webkit-text-stroke:0.12px;">Detector Color</span>
<svg style="left:131.9px;top:465.8px" width="6" height="4" viewBox="0 0 6 4"><path d="M0 0 H5.2 L2.6 3.1 Z" fill="#111"/></svg>
<span class="t" style="left:147.40px;top:463px;font-size:10.6px;transform:scaleX(0.9377);-webkit-text-stroke:0.12px;">UNSCATTERED LIG...</span>
<span class="t" style="left:295.25px;top:463px;font-size:10.6px;transform:scaleX(0.9700);-webkit-text-stroke:0.12px;">0</span>
<span class="t" style="left:343.25px;top:463px;font-size:10.6px;transform:scaleX(0.9700);-webkit-text-stroke:0.12px;">0</span>
<span class="t" style="left:377.49px;top:463px;font-size:10.6px;transform:scaleX(0.9650);-webkit-text-stroke:0.12px;">0.0</span>
<span class="t" style="left:435.21px;top:463px;font-size:10.6px;transform:scaleX(0.9650);-webkit-text-stroke:0.12px;">-2.0</span>
<span class="t" style="left:497.59px;top:463px;font-size:10.6px;transform:scaleX(0.9650);-webkit-text-stroke:0.12px;">3.0</span>
<span class="t" style="left:557.86px;top:463px;font-size:10.6px;transform:scaleX(0.9650);-webkit-text-stroke:0.12px;">90.0</span>
<span class="t" style="left:626.19px;top:463px;font-size:10.6px;transform:scaleX(0.9650);-webkit-text-stroke:0.12px;">0.0</span>
<span class="t" style="left:689.89px;top:463px;font-size:10.6px;transform:scaleX(0.9650);-webkit-text-stroke:0.12px;">0.0</span>
<span class="t" style="left:723.70px;top:463px;font-size:10.6px;transform:scaleX(0.9262);-webkit-text-stroke:0.12px;">ABS...</span>
<div style="position:absolute;left:3.4px;top:476.6px;width:789.6px;height:12.5px;background:#eeeeee;border-radius:0 0 4px 4px;"></div>
<div style="position:absolute;left:154.6px;top:476.6px;width:251px;height:12.5px;background:#cdcdcd;"></div>
<svg style="left:145.5px;top:479.4px" width="6" height="7" viewBox="0 0 6 7"><path d="M4.4 0.4 L1.2 3.5 L4.4 6.6" fill="none" stroke="#a3a3a3" stroke-width="1.25"/></svg>
<svg style="left:783.6px;top:479.4px" width="6" height="7" viewBox="0 0 6 7"><path d="M1.6 0.4 L4.8 3.5 L1.6 6.6" fill="none" stroke="#a3a3a3" stroke-width="1.25"/></svg>
</body></html>
